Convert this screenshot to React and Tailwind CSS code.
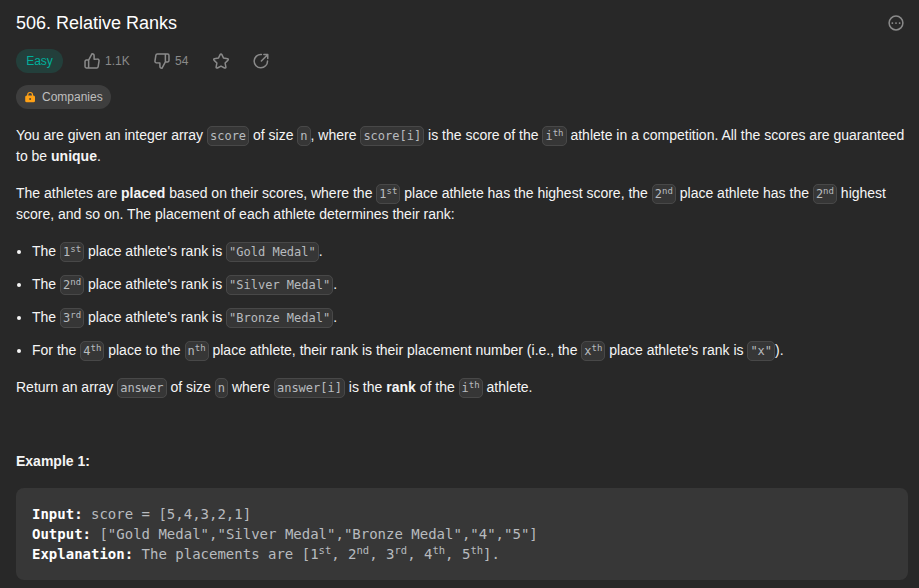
import React from "react";

const Code = ({ children, sup }) => (
  <code className="rounded-[5px] border border-[#484848] bg-[#363636] p-[2px] font-['DejaVu_Sans_Mono',monospace] text-[12px] leading-[12px] text-[#b8bbbf]">
    {children}
    {sup && <sup className="text-[9px] leading-none">{sup}</sup>}
  </code>
);

const Sup = ({ children }) => <sup className="text-[10.5px] leading-none">{children}</sup>;

const Icon = ({ children }) => (
  <svg
    className="size-[18px] shrink-0"
    viewBox="0 0 24 24"
    fill="none"
    stroke="currentColor"
    strokeWidth="2"
    strokeLinecap="round"
    strokeLinejoin="round"
  >
    {children}
  </svg>
);

const Thumb = () => (
  <path d="M7.500 10.500v10.700M7.500 10.800h-3a1.800 1.800 0 0 0-1.800 1.800v6.800a1.800 1.800 0 0 0 1.800 1.800h13.700a2 2 0 0 0 2-1.700l1.200-7.700a2 2 0 0 0-2-2.300h-4.600V5a2.700 2.700 0 0 0-2.700-2.700L7.500 10.800" />
);

const medals = [
  ["1", "st", "Gold"],
  ["2", "nd", "Silver"],
  ["3", "rd", "Bronze"],
];

export default function App() {
  return (
    <main className="h-[588px] w-full overflow-hidden bg-[#282828] pr-[11px] pl-4 pt-[11px] font-['Liberation_Sans',Arial,sans-serif] text-sm leading-[21px] text-[#f5f5f5]">
      <header className="flex h-6 items-center justify-between">
        <h1 className="text-lg leading-6 text-white">506. Relative Ranks</h1>
        <svg className="mr-[3px] size-[18px] text-[#8a8a8a]" viewBox="0 0 18 18" fill="none">
          <circle cx="9" cy="9" r="6.900" stroke="currentColor" strokeWidth="1.500" />
          <g fill="currentColor">
            <rect x="4.500" y="8.200" width="1.700" height="1.700" rx=".6" />
            <rect x="8.150" y="8.200" width="1.700" height="1.700" rx=".6" />
            <rect x="11.800" y="8.200" width="1.700" height="1.700" rx=".6" />
          </g>
        </svg>
      </header>

      <div className="mt-[14px] flex h-6 items-center text-xs text-[#8a8a8a]">
        <span className="flex h-6 w-[47px] items-center justify-center rounded-full bg-[#233f3b] text-[#00af9b]">Easy</span>
        <span className="ml-5 flex w-[70px] items-center gap-1">
          <Icon><Thumb /></Icon>
          1.1K
        </span>
        <span className="flex w-[59px] items-center gap-1">
          <Icon><g transform="rotate(180 12 12)"><Thumb /></g></Icon>
          54
        </span>
        <span className="flex w-10">
          <Icon>
            <path d="M11 3.200a1.150 1.150 0 0 1 2 0l2.400 4.900 5.400.8a1.150 1.150 0 0 1 .6 1.900l-3.900 3.900 1 5.400a1.150 1.150 0 0 1-1.700 1.200L12 18.800l-4.800 2.500a1.150 1.150 0 0 1-1.700-1.200l1-5.400-3.900-3.900a1.150 1.150 0 0 1 .6-1.900l5.400-.8z" />
          </Icon>
        </span>
        <Icon>
          <path d="M12.500 3.300A8.900 8.900 0 1 0 20.700 12M12.500 12l8.300-8.300M15.800 3.300h5.200v5.200" />
        </Icon>
      </div>

      <div className="mt-3 flex h-6 w-[95px] items-center rounded-full bg-[#3e3e3e] pl-2 text-xs text-[#bfbfbf]">
        <svg className="mr-1 size-[14px]" viewBox="0 0 14 14" fill="none">
          <path d="M3.700 6V4.900a2.400 2.400 0 0 1 4.800 0V6" stroke="#ffa116" strokeWidth="1.200" />
          <rect x="1.200" y="5.600" width="9.800" height="6.700" rx="1.500" fill="#ffa116" />
          <circle cx="6.100" cy="9" r="1" fill="#5a4629" />
        </svg>
        Companies
      </div>

      <p className="mt-4">
        You are given an integer array <Code>score</Code> of size <Code>n</Code>, where <Code>score[i]</Code> is the score of the{" "}
        <Code sup="th">i</Code> athlete in a competition. All the scores are guaranteed to be <b>unique</b>.
      </p>
      <p className="mt-4">
        The athletes are <b>placed</b> based on their scores, where the <Code sup="st">1</Code> place athlete has the highest score, the{" "}
        <Code sup="nd">2</Code> place athlete has the <Code sup="nd">2</Code> highest score, and so on. The placement of each athlete
        determines their rank:
      </p>
      <ul className="mt-4 flex list-disc flex-col gap-3 pl-4">
        {medals.map(([n, suffix, name]) => (
          <li key={n}>
            The <Code sup={suffix}>{n}</Code> place athlete's rank is <Code>{`"${name} Medal"`}</Code>.
          </li>
        ))}
        <li>
          For the <Code sup="th">4</Code> place to the <Code sup="th">n</Code> place athlete, their rank is their placement number (i.e.,
          the <Code sup="th">x</Code> place athlete's rank is <Code>"x"</Code>).
        </li>
      </ul>
      <p className="mt-4">
        Return an array <Code>answer</Code> of size <Code>n</Code> where <Code>answer[i]</Code> is the <b>rank</b> of the{" "}
        <Code sup="th">i</Code> athlete.
      </p>
      <p className="mt-[53px] font-bold">Example 1:</p>
      <pre className="mt-4 rounded-lg bg-[#373737] p-4 font-['DejaVu_Sans_Mono',monospace] text-sm leading-5 text-[#b8bbbf]">
        <b className="text-white">Input:</b> score = [5,4,3,2,1]{"\n"}
        <b className="text-white">Output:</b> ["Gold Medal","Silver Medal","Bronze Medal","4","5"]{"\n"}
        <b className="text-white">Explanation:</b> The placements are [1<Sup>st</Sup>, 2<Sup>nd</Sup>, 3<Sup>rd</Sup>, 4<Sup>th</Sup>, 5
        <Sup>th</Sup>].
      </pre>
    </main>
  );
}
